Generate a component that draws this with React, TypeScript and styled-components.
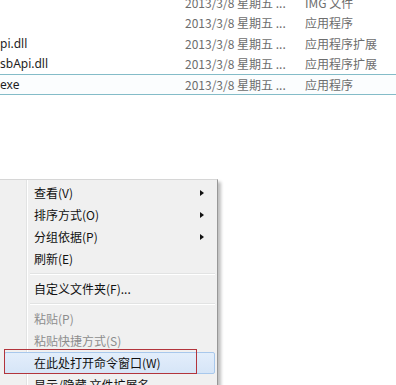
import React from "react";
import styled, { createGlobalStyle } from "styled-components";

const GlobalStyle = createGlobalStyle`
  html, body {
    margin: 0;
    padding: 0;
    background: #ffffff;
    overflow: hidden;
  }
  body {
    font-family: "Segoe UI", "Noto Sans", "Noto Sans CJK SC", sans-serif;
    font-size: 12px;
  }
`;

const Screen = styled.div`
  width: 396px;
  height: 385px;
  overflow: hidden;
  position: relative;
`;

const FileList = styled.div`
  margin-top: -8px;
  width: 420px;
  display: flex;
  flex-direction: column;
`;

const Row = styled.div<{ $selected?: boolean }>`
  display: grid;
  grid-template-columns: 185px 120px 1fr;
  align-items: center;
  height: 20.5px;
  box-sizing: border-box;
  border-top: 1px solid ${(p) => (p.$selected ? "#84bcc8" : "transparent")};
  border-bottom: 1px solid ${(p) => (p.$selected ? "#84bcc8" : "transparent")};
  background: ${(p) => (p.$selected ? "#fbfdfe" : "transparent")};
`;

const Name = styled.span`
  color: #1e1e1e;
  font-family: "Noto Sans", "Noto Sans CJK SC", sans-serif;
  font-size: 12px;
  white-space: nowrap;
`;

const Meta = styled.span`
  color: #6d6d6d;
  font-family: "Noto Sans CJK SC", sans-serif;
  font-size: 12px;
  white-space: nowrap;
`;

const Menu = styled.div`
  margin-top: 84px;
  width: 218px;
  box-sizing: border-box;
  background: #f0f0f0;
  border-top: 1px solid #d6d6d6;
  border-right: 1px solid #979797;
  box-shadow: 3px 3px 3px rgba(0, 0, 0, 0.25);
  padding: 2px;
  position: relative;
  display: flex;
  flex-direction: column;
  &::before {
    content: "";
    position: absolute;
    top: 0;
    bottom: 0;
    left: 26px;
    width: 1px;
    background: #e2e3e3;
    box-shadow: 1px 0 0 #ffffff;
  }
`;

const Item = styled.div<{ $disabled?: boolean; $hover?: boolean }>`
  position: relative;
  z-index: 1;
  height: 22px;
  display: flex;
  align-items: center;
  padding-left: 29px;
  padding-right: 10px;
  margin-left: 2px;
  box-sizing: border-box;
  font-family: "Noto Sans CJK SC", sans-serif;
  font-size: 12px;
  color: ${(p) => (p.$disabled ? "#8d8d8d" : "#111111")};
  border: 1px solid ${(p) => (p.$hover ? "#a8c8ec" : "transparent")};
  border-radius: 2px;
  background: ${(p) =>
    p.$hover ? "linear-gradient(#e3eefb, #d6e5f7)" : "transparent"};
`;

const Label = styled.span`
  flex: 1;
  white-space: nowrap;
`;

const Arrow = styled.span`
  width: 0;
  height: 0;
  border-top: 3.5px solid transparent;
  border-bottom: 3.5px solid transparent;
  border-left: 4px solid #111111;
`;

const Separator = styled.div`
  height: 8px;
  display: flex;
  align-items: center;
  padding-left: 28px;
  &::after {
    content: "";
    flex: 1;
    height: 1px;
    background: #e2e3e3;
    box-shadow: 0 1px 0 #ffffff;
  }
`;

const RedMark = styled.div`
  position: absolute;
  left: 4px;
  top: 349px;
  width: 193px;
  height: 25px;
  box-sizing: border-box;
  border: 1.5px solid #b2343c;
  z-index: 2;
`;

const files = [
  { name: "", date: "2013/3/8 星期五 ...", type: "IMG 文件" },
  { name: "", date: "2013/3/8 星期五 ...", type: "应用程序" },
  { name: "pi.dll", date: "2013/3/8 星期五 ...", type: "应用程序扩展" },
  { name: "sbApi.dll", date: "2013/3/8 星期五 ...", type: "应用程序扩展" },
  { name: "exe", date: "2013/3/8 星期五 ...", type: "应用程序", selected: true },
];

type Entry =
  | { sep: true }
  | { label: string; sub?: boolean; disabled?: boolean; hover?: boolean };

const entries: Entry[] = [
  { label: "查看(V)", sub: true },
  { label: "排序方式(O)", sub: true },
  { label: "分组依据(P)", sub: true },
  { label: "刷新(E)" },
  { sep: true },
  { label: "自定义文件夹(F)..." },
  { sep: true },
  { label: "粘贴(P)", disabled: true },
  { label: "粘贴快捷方式(S)", disabled: true },
  { label: "在此处打开命令窗口(W)", hover: true },
  { label: "显示/隐藏 文件扩展名" },
];

export default function App() {
  return (
    <Screen>
      <GlobalStyle />
      <FileList>
        {files.map((f, i) => (
          <Row key={i} $selected={f.selected}>
            <Name>{f.name}</Name>
            <Meta>{f.date}</Meta>
            <Meta>{f.type}</Meta>
          </Row>
        ))}
      </FileList>
      <Menu>
        {entries.map((e, i) =>
          "sep" in e ? (
            <Separator key={i} />
          ) : (
            <Item key={i} $disabled={e.disabled} $hover={e.hover}>
              <Label>{e.label}</Label>
              {e.sub && <Arrow />}
            </Item>
          )
        )}
      </Menu>
      <RedMark />
    </Screen>
  );
}
